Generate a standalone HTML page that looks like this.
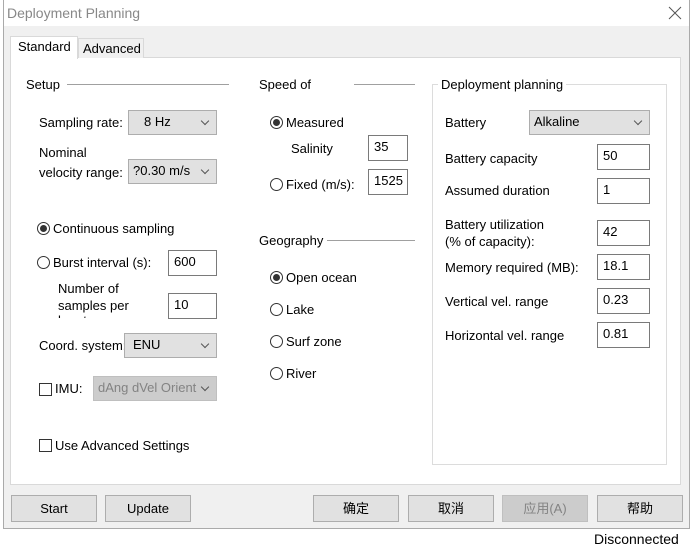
<!DOCTYPE html>
<html><head><meta charset="utf-8"><style>
*{box-sizing:border-box;margin:0;padding:0}
body{width:693px;height:536px;background:#fff;position:relative;overflow:hidden;font-family:"Liberation Sans","Noto Sans CJK SC",sans-serif;font-size:13px;color:#000}
.a{position:absolute}
.t{position:absolute;white-space:nowrap;line-height:16px}
.box{position:absolute;background:#fff;border:1px solid #7a7a7a;padding:2px 0 0 5px;line-height:18px}
.cb{position:absolute;background:#e1e1e1;border:1px solid #adadad;padding:0 0 0 12px;line-height:22px}
.cb:after{content:"";position:absolute;right:8px;top:7px;width:5px;height:5px;border-right:1px solid #555;border-bottom:1px solid #555;transform:rotate(45deg)}
.rd{position:absolute;width:13px;height:13px;border:1px solid #333;border-radius:50%;background:#fff}
.rd.on:after{content:"";position:absolute;left:2px;top:2px;width:7px;height:7px;border-radius:50%;background:#333}
.ck{position:absolute;width:13px;height:13px;border:1px solid #333;background:#fff}
.btn{position:absolute;background:#e1e1e1;border:1px solid #adadad;text-align:center;line-height:25px;height:27px;width:86px}
.ln{position:absolute;height:1px;background:#a0a0a0}
</style></head><body>
<div class="a" style="left:3px;top:0;width:687px;height:529px;background:#f0f0f0;border:1px solid #aaa;border-top:none"></div>
<div class="a" style="left:4px;top:0;width:685px;height:26px;background:#fff"></div>
<div class="t" style="left:7px;top:5px;color:#888;font-size:14px">Deployment Planning</div>
<svg class="a" style="left:668px;top:6px" width="14" height="14"><path d="M1 1L13 13M13 1L1 13" stroke="#555" stroke-width="1"/></svg>
<div class="a" style="left:10px;top:57px;width:671px;height:428px;background:#fff;border:1px solid #d9d9d9"></div>
<div class="a" style="left:78px;top:38px;width:66px;height:20px;background:#f0f0f0;border:1px solid #d9d9d9;border-bottom:none"></div>
<div class="t" style="left:83px;top:41px">Advanced</div>
<div class="a" style="left:10px;top:36px;width:68px;height:23px;background:#fff;border:1px solid #d9d9d9;border-bottom:none"></div>
<div class="t" style="left:18px;top:39px">Standard</div>

<div class="t" style="left:26px;top:77px">Setup</div><div class="ln" style="left:67px;top:84px;width:162px"></div>
<div class="t" style="left:39px;top:115px">Sampling rate:</div>
<div class="cb" style="left:128px;top:110px;width:89px;height:25px;padding-left:15px">8 Hz</div>
<div class="t" style="left:39px;top:145px">Nominal</div>
<div class="t" style="left:39px;top:165px">velocity range:</div>
<div class="cb" style="left:128px;top:159px;width:89px;height:25px;padding-left:4px">?0.30 m/s</div>
<div class="rd on" style="left:37px;top:222px"></div><div class="t" style="left:53px;top:221px">Continuous sampling</div>
<div class="rd" style="left:37px;top:256px"></div><div class="t" style="left:53px;top:255px">Burst interval (s):</div>
<div class="box" style="left:168px;top:250px;width:49px;height:26px">600</div>
<div class="t" style="left:58px;top:281px">Number of</div>
<div class="t" style="left:58px;top:298px">samples per</div>
<div class="a" style="left:58px;top:314px;width:100px;height:4px;overflow:hidden"><div class="t" style="top:-1px">burst:</div></div>
<div class="box" style="left:168px;top:293px;width:49px;height:26px">10</div>
<div class="t" style="left:39px;top:338px">Coord. system:</div>
<div class="cb" style="left:124px;top:333px;width:93px;height:25px;padding-left:8px">ENU</div>
<div class="ck" style="left:39px;top:383px"></div><div class="t" style="left:55px;top:381px">IMU:</div>
<div class="cb" style="left:93px;top:376px;width:124px;height:25px;padding-left:4px;background:#ccc;border-color:#bfbfbf;color:#838383;overflow:hidden">dAng dVel Orient</div>
<div class="ck" style="left:39px;top:439px"></div><div class="t" style="left:55px;top:438px">Use Advanced Settings</div>

<div class="t" style="left:259px;top:77px">Speed of</div><div class="ln" style="left:354px;top:84px;width:61px"></div>
<div class="rd on" style="left:270px;top:116px"></div><div class="t" style="left:286px;top:115px">Measured</div>
<div class="t" style="left:291px;top:141px">Salinity</div>
<div class="box" style="left:368px;top:135px;width:40px;height:26px">35</div>
<div class="rd" style="left:270px;top:178px"></div><div class="t" style="left:286px;top:177px">Fixed (m/s):</div>
<div class="box" style="left:368px;top:169px;width:40px;height:26px">1525</div>
<div class="t" style="left:259px;top:233px">Geography</div><div class="ln" style="left:327px;top:240px;width:88px"></div>
<div class="rd on" style="left:270px;top:271px"></div><div class="t" style="left:286px;top:270px">Open ocean</div>
<div class="rd" style="left:270px;top:303px"></div><div class="t" style="left:286px;top:302px">Lake</div>
<div class="rd" style="left:270px;top:335px"></div><div class="t" style="left:286px;top:334px">Surf zone</div>
<div class="rd" style="left:270px;top:367px"></div><div class="t" style="left:286px;top:366px">River</div>

<div class="a" style="left:432px;top:84px;width:235px;height:381px;border:1px solid #dcdcdc"></div>
<div class="t" style="left:438px;top:77px;background:#fff;padding:0 3px">Deployment planning</div>
<div class="t" style="left:445px;top:115px">Battery</div>
<div class="cb" style="left:529px;top:110px;width:121px;height:25px;padding-left:4px">Alkaline</div>
<div class="t" style="left:445px;top:151px">Battery capacity</div><div class="box" style="left:597px;top:144px;width:53px;height:26px">50</div>
<div class="t" style="left:445px;top:183px">Assumed duration</div><div class="box" style="left:597px;top:178px;width:53px;height:26px">1</div>
<div class="t" style="left:445px;top:217px">Battery utilization</div>
<div class="t" style="left:445px;top:234px">(% of capacity):</div><div class="box" style="left:597px;top:220px;width:53px;height:26px">42</div>
<div class="t" style="left:445px;top:260px">Memory required (MB):</div><div class="box" style="left:597px;top:254px;width:53px;height:26px">18.1</div>
<div class="t" style="left:445px;top:294px">Vertical vel. range</div><div class="box" style="left:597px;top:288px;width:53px;height:26px">0.23</div>
<div class="t" style="left:445px;top:328px">Horizontal vel. range</div><div class="box" style="left:597px;top:322px;width:53px;height:26px">0.81</div>

<div class="btn" style="left:11px;top:495px">Start</div>
<div class="btn" style="left:105px;top:495px">Update</div>
<div class="btn" style="left:313px;top:495px">确定</div>
<div class="btn" style="left:408px;top:495px">取消</div>
<div class="btn" style="left:502px;top:495px;background:#ccc;border-color:#bfbfbf;color:#838383">应用(A)</div>
<div class="btn" style="left:597px;top:495px">帮助</div>
<div class="t" style="left:594px;top:531px;font-size:14px">Disconnected</div>
</body></html>
